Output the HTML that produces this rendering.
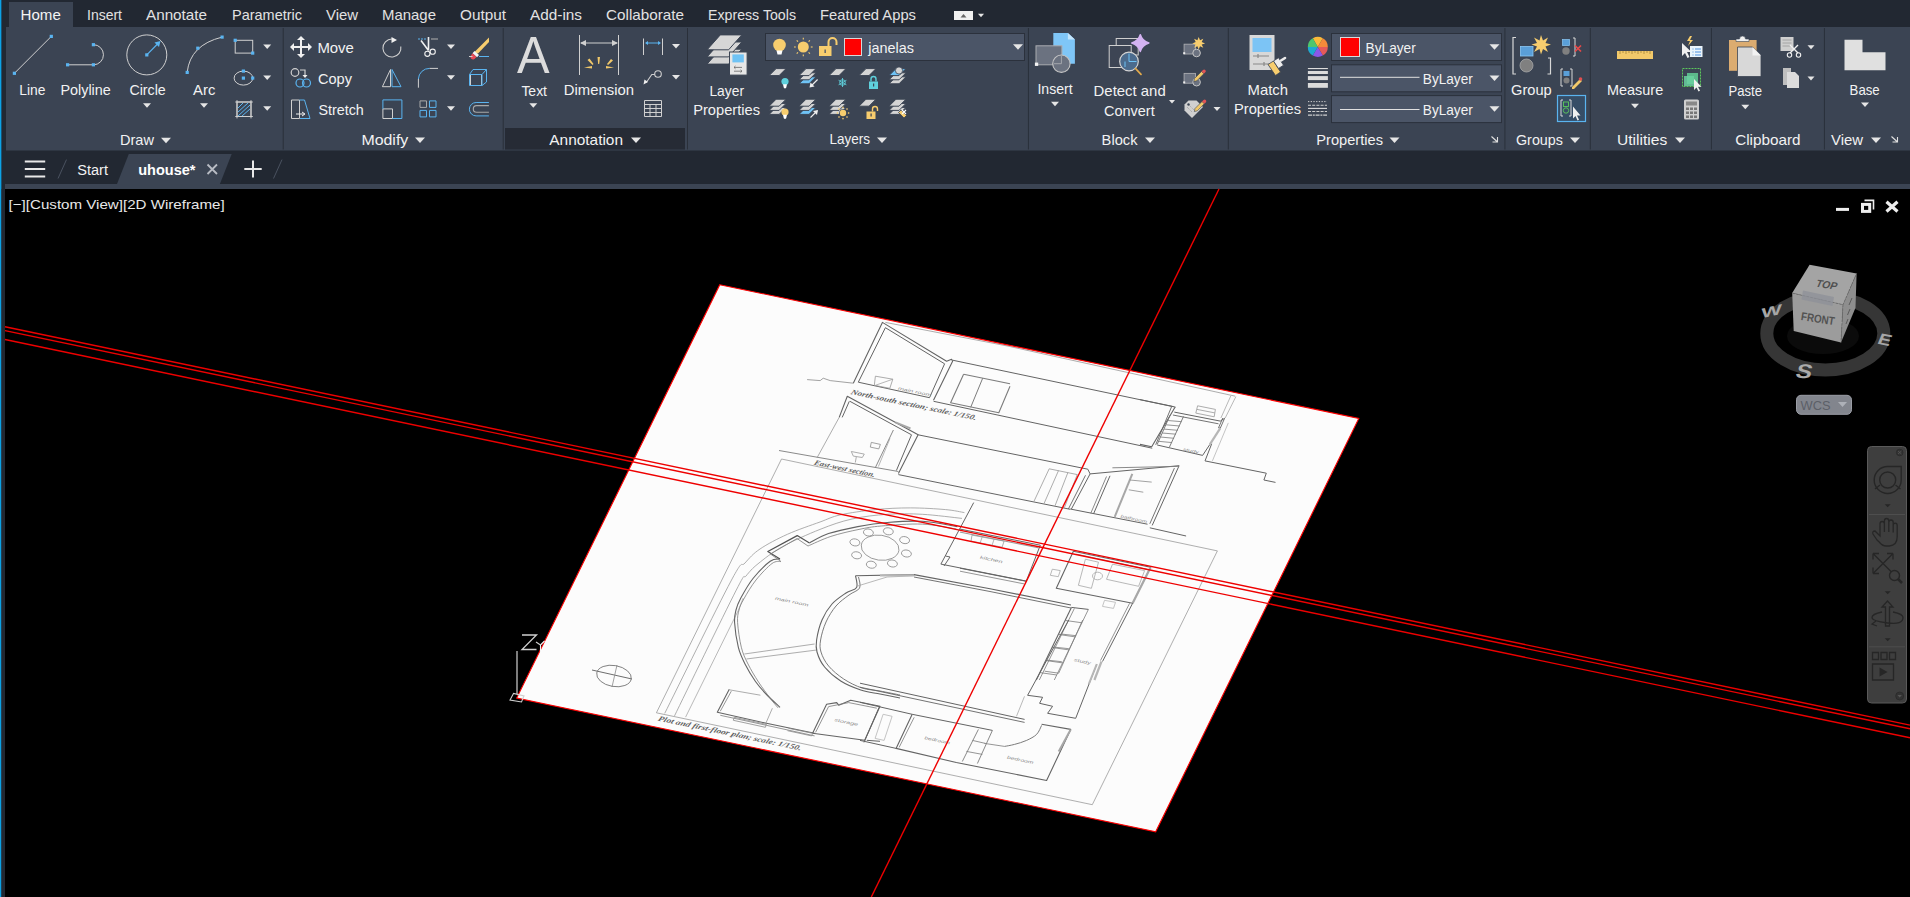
<!DOCTYPE html>
<html><head><meta charset="utf-8"><style>
html,body{margin:0;padding:0;background:#000;width:1910px;height:897px;overflow:hidden}
svg{display:block}
text{font-family:"Liberation Sans", sans-serif}
</style></head><body>
<svg width="1910" height="897" viewBox="0 0 1910 897">
<rect x="0" y="0" width="1910" height="897" fill="#000" />
<rect x="0" y="0" width="1910" height="189" fill="#222832" />
<rect x="0" y="0" width="1.2" height="897" fill="#0ca2e6" />
<rect x="6" y="27" width="1904" height="123.5" fill="#3b4453" />
<rect x="9" y="2" width="64" height="25" fill="#3b4453" />
<rect x="282.7" y="28" width="1" height="121.5" fill="#2a303a" />
<rect x="502.7" y="28" width="1" height="121.5" fill="#2a303a" />
<rect x="687.0" y="28" width="1" height="121.5" fill="#2a303a" />
<rect x="1027.9" y="28" width="1" height="121.5" fill="#2a303a" />
<rect x="1227.8" y="28" width="1" height="121.5" fill="#2a303a" />
<rect x="1504.4" y="28" width="1" height="121.5" fill="#2a303a" />
<rect x="1589.8" y="28" width="1" height="121.5" fill="#2a303a" />
<rect x="1710.9" y="28" width="1" height="121.5" fill="#2a303a" />
<rect x="1823.9" y="28" width="1" height="121.5" fill="#2a303a" />
<rect x="505" y="128" width="180" height="21.6" fill="#262b35" />
<rect x="5" y="184" width="1905" height="5" fill="#3b4453" />
<text x="20.6" y="20.0" font-size="15" fill="#f4f4f4" font-weight="normal" textLength="40.2" lengthAdjust="spacingAndGlyphs" >Home</text>
<text x="87.0" y="20.0" font-size="15" fill="#e2e2e2" font-weight="normal" textLength="35.0" lengthAdjust="spacingAndGlyphs" >Insert</text>
<text x="146.0" y="20.0" font-size="15" fill="#e2e2e2" font-weight="normal" textLength="61.0" lengthAdjust="spacingAndGlyphs" >Annotate</text>
<text x="232.0" y="20.0" font-size="15" fill="#e2e2e2" font-weight="normal" textLength="70.0" lengthAdjust="spacingAndGlyphs" >Parametric</text>
<text x="326.0" y="20.0" font-size="15" fill="#e2e2e2" font-weight="normal" textLength="32.0" lengthAdjust="spacingAndGlyphs" >View</text>
<text x="382.0" y="20.0" font-size="15" fill="#e2e2e2" font-weight="normal" textLength="54.0" lengthAdjust="spacingAndGlyphs" >Manage</text>
<text x="460.0" y="20.0" font-size="15" fill="#e2e2e2" font-weight="normal" textLength="46.0" lengthAdjust="spacingAndGlyphs" >Output</text>
<text x="530.0" y="20.0" font-size="15" fill="#e2e2e2" font-weight="normal" textLength="52.0" lengthAdjust="spacingAndGlyphs" >Add-ins</text>
<text x="606.0" y="20.0" font-size="15" fill="#e2e2e2" font-weight="normal" textLength="78.0" lengthAdjust="spacingAndGlyphs" >Collaborate</text>
<text x="708.0" y="20.0" font-size="15" fill="#e2e2e2" font-weight="normal" textLength="88.0" lengthAdjust="spacingAndGlyphs" >Express Tools</text>
<text x="820.0" y="20.0" font-size="15" fill="#e2e2e2" font-weight="normal" textLength="96.0" lengthAdjust="spacingAndGlyphs" >Featured Apps</text>
<line x1="14.4" y1="73.3" x2="51.3" y2="36.4" stroke="#d0d0d0" stroke-width="1"/>
<rect x="12.8" y="71.7" width="3.2" height="3.2" fill="#5ab4f0"/>
<rect x="49.7" y="34.8" width="3.2" height="3.2" fill="#5ab4f0"/>
<path d="M67.6 64.8H93.4A10 10 0 0 0 93.4 44.7" fill="none" stroke="#d0d0d0" stroke-width="1"/>
<rect x="66.0" y="63.2" width="3.2" height="3.2" fill="#5ab4f0"/>
<rect x="91.8" y="63.2" width="3.2" height="3.2" fill="#5ab4f0"/>
<rect x="91.8" y="43.1" width="3.2" height="3.2" fill="#5ab4f0"/>
<circle cx="146.8" cy="54.9" r="20" fill="none" stroke="#d0d0d0" stroke-width="1"/>
<line x1="146.8" y1="54.9" x2="158" y2="43.5" stroke="#5ab4f0" stroke-width="1.2"/>
<path d="M160.5 41 l-6 1.5 l4.5 4.5z" fill="#5ab4f0"/>
<rect x="145.2" y="53.3" width="3.2" height="3.2" fill="#5ab4f0"/>
<path d="M187.2 72.4 Q190 45 222.1 37.1" fill="none" stroke="#d0d0d0" stroke-width="1"/>
<rect x="185.6" y="70.8" width="3.2" height="3.2" fill="#5ab4f0"/>
<rect x="196.2" y="46.6" width="3.2" height="3.2" fill="#5ab4f0"/>
<rect x="220.5" y="35.5" width="3.2" height="3.2" fill="#5ab4f0"/>
<rect x="235.2" y="40.3" width="17.5" height="12.8" fill="none" stroke="#d0d0d0" stroke-width="1"/>
<rect x="233.6" y="38.7" width="3.2" height="3.2" fill="#5ab4f0"/>
<rect x="251.1" y="51.5" width="3.2" height="3.2" fill="#5ab4f0"/>
<path d="M263.2 44.5h8l-4.0 4.5z" fill="#e6e6e6"/>
<ellipse cx="243.4" cy="78.1" rx="9.3" ry="7" fill="none" stroke="#d0d0d0" stroke-width="1"/>
<rect x="241.8" y="76.5" width="3.2" height="3.2" fill="#5ab4f0"/>
<rect x="241.8" y="69.5" width="3.2" height="3.2" fill="#5ab4f0"/>
<rect x="251.1" y="76.5" width="3.2" height="3.2" fill="#5ab4f0"/>
<path d="M263.2 75.5h8l-4.0 4.5z" fill="#e6e6e6"/>
<rect x="237" y="102" width="14" height="14.5" fill="none" stroke="#d0d0d0" stroke-width="1"/>
<path d="M235.3 102H252.8M235.3 116.5H252.8M237 100.2V118.4M251 100.2V118.4" stroke="#d0d0d0" stroke-width="1"/>
<path d="M238 112l10-9M238 116l12-11M242 116l8-7M238 108l5-5" stroke="#5ab4f0" stroke-width="1"/>
<path d="M263.2 106.2h8l-4.0 4.5z" fill="#e6e6e6"/>
<text x="19.3" y="95.2" font-size="15" fill="#f2f2f2" font-weight="normal" textLength="26.2" lengthAdjust="spacingAndGlyphs" >Line</text>
<text x="60.4" y="95.2" font-size="15" fill="#f2f2f2" font-weight="normal" textLength="50.4" lengthAdjust="spacingAndGlyphs" >Polyline</text>
<text x="129.4" y="95.2" font-size="15" fill="#f2f2f2" font-weight="normal" textLength="36.4" lengthAdjust="spacingAndGlyphs" >Circle</text>
<text x="193.1" y="95.2" font-size="15" fill="#f2f2f2" font-weight="normal" textLength="22.2" lengthAdjust="spacingAndGlyphs" >Arc</text>
<path d="M143.0 103.2h8l-4.0 4.5z" fill="#e6e6e6"/>
<path d="M200.0 103.2h8l-4.0 4.5z" fill="#e6e6e6"/>
<text x="120.0" y="145.0" font-size="15" fill="#f2f2f2" font-weight="normal" textLength="34.0" lengthAdjust="spacingAndGlyphs" >Draw</text>
<path d="M161.0 137.7h10l-5.0 5.5z" fill="#e6e6e6"/>
<path d="M301 37v20M291 47h20" stroke="#f0f0f0" stroke-width="2"/>
<path d="M301 36l-4 4h8zM301 58l-4-4h8zM290 47l4-4v8zM312 47l-4-4v8z" fill="#f0f0f0"/>
<text x="317.4" y="52.5" font-size="15" fill="#f2f2f2" font-weight="normal" textLength="36.5" lengthAdjust="spacingAndGlyphs" >Move</text>
<circle cx="295" cy="72.5" r="3.8" fill="none" stroke="#d0d0d0" stroke-width="1.2"/>
<path d="M300 70h5v6" fill="none" stroke="#d0d0d0" stroke-width="1.2"/><path d="M302.5 75h5l-2.5 3z" fill="#f0f0f0"/>
<circle cx="300" cy="83" r="4" fill="none" stroke="#5ab4f0" stroke-width="1.2"/><circle cx="306.5" cy="83" r="4" fill="none" stroke="#5ab4f0" stroke-width="1.2"/>
<text x="318.0" y="83.7" font-size="15" fill="#f2f2f2" font-weight="normal" textLength="34.0" lengthAdjust="spacingAndGlyphs" >Copy</text>
<path d="M291.5 100h8v18.5h-8z" fill="none" stroke="#d0d0d0" stroke-width="1"/>
<path d="M299.5 100h5l5.5 18.5h-10" fill="none" stroke="#5ab4f0" stroke-width="1"/>
<path d="M296 114h8M302 112l3 2-3 2" fill="none" stroke="#f0f0f0" stroke-width="1"/>
<text x="318.4" y="114.9" font-size="15" fill="#f2f2f2" font-weight="normal" textLength="45.4" lengthAdjust="spacingAndGlyphs" >Stretch</text>
<path d="M392 39A9 9 0 1 0 400.8 46.5" fill="none" stroke="#d0d0d0" stroke-width="1.1"/><path d="M391.5 37l5.5 3-5.5 3z" fill="#f0f0f0"/>
<path d="M418 39h9" stroke="#5ab4f0" stroke-width="1" stroke-dasharray="2 1"/><path d="M431 39h7" stroke="#a8a8a8" stroke-width="1.1"/>
<path d="M421 40.5l7.5 10M428.5 37v13.5" stroke="#f0f0f0" stroke-width="1.6"/><circle cx="427.4" cy="53.8" r="2.6" fill="none" stroke="#f0f0f0" stroke-width="1.1"/><circle cx="432.7" cy="51.7" r="2.6" fill="none" stroke="#f0f0f0" stroke-width="1.1"/>
<path d="M447.0 44.5h8l-4.0 4.5z" fill="#e6e6e6"/>
<path d="M478 53.5l11-11.5v-4.5l-15.5 15.5z" fill="#f7cd6e"/><path d="M474.5 51l4.5 4-2 2.3-4.5-4z" fill="#f4f4f4"/><path d="M472.5 53.3l4 3.7-2 2a2.5 2.5 0 0 1-3.5-3.5z" fill="#e84a55"/><path d="M479 56.5h10" stroke="#5ab4f0" stroke-width="1"/><path d="M469 56.5h3.5" stroke="#d0d0d0" stroke-width="1"/>
<path d="M382.4 86.7L390.5 69.5V86.7z" fill="none" stroke="#d0d0d0" stroke-width="1"/><path d="M392 69.5L401 86.7H392z" fill="none" stroke="#5ab4f0" stroke-width="1"/>
<path d="M418.4 87.7V79" fill="none" stroke="#d0d0d0" stroke-width="1"/><path d="M418.4 79A11 11 0 0 1 429.7 68.4" fill="none" stroke="#5ab4f0" stroke-width="1"/><path d="M429.7 68.4H438" fill="none" stroke="#d0d0d0" stroke-width="1"/>
<path d="M447.0 75.2h8l-4.0 4.5z" fill="#e6e6e6"/>
<path d="M470.5 74.5h11v11h-11z" fill="none" stroke="#d0d0d0" stroke-width="1"/><path d="M469.5 74.5v11h12.5l4.5-3.5v-12.5h-13.5zM469.5 74.5h12.5l4.5-5M482 74.5v11" fill="none" stroke="#5ab4f0" stroke-width="1"/>
<path d="M382.9 108.9h9.6v9.6h-9.6z" fill="none" stroke="#d0d0d0" stroke-width="1"/><path d="M382.9 108.9V99.9h19v18.6h-9.4" fill="none" stroke="#5ab4f0" stroke-width="1"/>
<path d="M429.5 100.9h6.5v6.5h-6.5zM420 110.4h6.5v6.5h-6.5zM429.5 110.4h6.5v6.5h-6.5z" fill="none" stroke="#5ab4f0" stroke-width="1"/><path d="M420 100.9h6.5v6.5h-6.5z" fill="none" stroke="#a8a8a8" stroke-width="1"/>
<path d="M447.0 106.3h8l-4.0 4.5z" fill="#e6e6e6"/>
<path d="M488.9 102.5h-12.8a6.7 6.7 0 0 0 0 13.4h12.8" fill="none" stroke="#5ab4f0" stroke-width="1"/><path d="M488.9 105.6h-12.3a3.3 3.3 0 0 0 0 6.6h12.3" fill="none" stroke="#a8a8a8" stroke-width="1.1"/>
<text x="361.4" y="144.6" font-size="15" fill="#f2f2f2" font-weight="normal" textLength="46.9" lengthAdjust="spacingAndGlyphs" >Modify</text>
<path d="M415.0 137.6h10l-5.0 5.5z" fill="#e6e6e6"/>
<text x="517.0" y="72.5" font-size="51" fill="#dcdcdc" font-weight="normal" textLength="32.6" lengthAdjust="spacingAndGlyphs" >A</text>
<text x="521.4" y="95.7" font-size="15" fill="#f2f2f2" font-weight="normal" textLength="25.6" lengthAdjust="spacingAndGlyphs" >Text</text>
<path d="M529.3 103.2h8l-4.0 4.5z" fill="#e6e6e6"/>
<path d="M579.5 35v40M618.5 35v40M581 43h36" stroke="#d0d0d0" stroke-width="1"/><path d="M580 43l6-3v6zM618 43l-6-3v6z" fill="#d0d0d0"/>
<g fill="#f2c96a"><path d="M597.5 57l2.5 0 -0.8 7h-1z"/><path d="M587.5 60l2-1.5 4 5.5-1 1z"/><path d="M611 59l2 1.5-5 4.5-1-1z"/><path d="M584 67.5l8-1.5v2.5z"/><path d="M614 67.5l-8-1.5v2.5z"/></g>
<text x="563.8" y="95.3" font-size="15" fill="#f2f2f2" font-weight="normal" textLength="70.2" lengthAdjust="spacingAndGlyphs" >Dimension</text>
<path d="M643.5 38.5v16.5M662.5 38.5v16.5" stroke="#d0d0d0" stroke-width="1"/><path d="M646 43h14" stroke="#5ab4f0" stroke-width="1"/><path d="M645 43l3-2v4zM661 43l-3-2v4z" fill="#5ab4f0"/>
<path d="M672.0 44.1h8l-4.0 4.5z" fill="#e6e6e6"/>
<circle cx="658" cy="74" r="3.3" fill="none" stroke="#d0d0d0" stroke-width="1.1"/><path d="M654.8 74.5h-3l-5.5 8" fill="none" stroke="#d0d0d0" stroke-width="1.1"/><path d="M643.5 84.5l1-5 3.5 2.5z" fill="#f0f0f0"/>
<path d="M672.0 75.0h8l-4.0 4.5z" fill="#e6e6e6"/>
<path d="M644.5 100.5h17v16h-17zM644.5 104.5h17M644.5 108.5h17M644.5 112.5h17M650 104.5v12M656 104.5v12" fill="none" stroke="#d0d0d0" stroke-width="1"/>
<text x="549.3" y="145.0" font-size="15" fill="#f2f2f2" font-weight="normal" textLength="73.7" lengthAdjust="spacingAndGlyphs" >Annotation</text>
<path d="M631.0 137.6h10l-5.0 5.5z" fill="#e6e6e6"/>
<path d="M707.1 64.1L720.3 49.2H741.8L728.6 64.1z" fill="#d6d6d6" stroke="#3b4453" stroke-width="1"/>
<path d="M707.1 56.9L720.3 42.0H741.8L728.6 56.9z" fill="#d6d6d6" stroke="#3b4453" stroke-width="1"/>
<path d="M707.1 49.8L720.3 34.9H741.8L728.6 49.8z" fill="#d6d6d6" stroke="#3b4453" stroke-width="1"/>
<rect x="729.5" y="52" width="17.6" height="23.1" fill="#e6e6e6" stroke="#3b4453" stroke-width="1"/><rect x="732.4" y="54.4" width="11.4" height="8" fill="#6fc3f5"/>
<path d="M734 67.4h8M734 71.2h8" stroke="#666" stroke-width="0.8"/><path d="M735.5 66l-1.5 1.4 1.5 1.4M740.5 69.8l1.5 1.4-1.5 1.4" fill="none" stroke="#666" stroke-width="0.8"/>
<text x="709.4" y="95.5" font-size="15" fill="#f2f2f2" font-weight="normal" textLength="34.6" lengthAdjust="spacingAndGlyphs" >Layer</text>
<text x="693.2" y="114.8" font-size="15" fill="#f2f2f2" font-weight="normal" textLength="66.8" lengthAdjust="spacingAndGlyphs" >Properties</text>
<rect x="765.5" y="33.5" width="259" height="27" fill="#4b5567" stroke="#2b313c" stroke-width="1"/>
<circle cx="779.5" cy="45" r="6.3" fill="#f7cd6e"/><path d="M776.5 50.5h6l-1 4h-4z" fill="#fff"/>
<circle cx="803.3" cy="47" r="5.5" fill="#f7cd6e"/>
<line x1="810.8" y1="47.0" x2="812.6" y2="47.0" stroke="#f7cd6e" stroke-width="1.1"/>
<line x1="808.6" y1="52.3" x2="809.9" y2="53.6" stroke="#f7cd6e" stroke-width="1.1"/>
<line x1="803.3" y1="54.5" x2="803.3" y2="56.3" stroke="#f7cd6e" stroke-width="1.1"/>
<line x1="798.0" y1="52.3" x2="796.7" y2="53.6" stroke="#f7cd6e" stroke-width="1.1"/>
<line x1="795.8" y1="47.0" x2="794.0" y2="47.0" stroke="#f7cd6e" stroke-width="1.1"/>
<line x1="798.0" y1="41.7" x2="796.7" y2="40.4" stroke="#f7cd6e" stroke-width="1.1"/>
<line x1="803.3" y1="39.5" x2="803.3" y2="37.7" stroke="#f7cd6e" stroke-width="1.1"/>
<line x1="808.6" y1="41.7" x2="809.9" y2="40.4" stroke="#f7cd6e" stroke-width="1.1"/>
<rect x="819" y="46" width="12.5" height="10" fill="#f7cd6e"/><path d="M828.5 46v-4a4 4 0 0 1 8 0v3" fill="none" stroke="#f7cd6e" stroke-width="2"/><rect x="824.5" y="49.5" width="1.3" height="3.5" fill="#4b5567"/>
<rect x="844.5" y="38.5" width="17" height="17" fill="#ff0000" stroke="#d8d8d8" stroke-width="1"/>
<text x="868.3" y="52.5" font-size="15" fill="#f2f2f2" font-weight="normal" textLength="45.7" lengthAdjust="spacingAndGlyphs" >janelas</text>
<path d="M1013.0 44.2h10l-5.0 5.5z" fill="#e6e6e6"/>
<path d="M769.1 75.6L776.1 68.6H786.1L779.1 75.6z" fill="#d4d4d4" stroke="#3b4453" stroke-width="1"/>
<circle cx="785" cy="81.5" r="3.6" fill="#5fd0dc"/><path d="M783 84.3h4l-0.6 2.8a1.4 1.4 0 0 1-2.8 0z" fill="#fff"/>
<path d="M799.0 83.8L806.0 76.8H816.0L809.0 83.8z" fill="#6fc3f5" stroke="#3b4453" stroke-width="1"/>
<path d="M799.0 79.8L806.0 72.8H816.0L809.0 79.8z" fill="#d4d4d4" stroke="#3b4453" stroke-width="1"/>
<path d="M799.0 75.6L806.0 68.6H816.0L809.0 75.6z" fill="#d4d4d4" stroke="#3b4453" stroke-width="1"/>
<path d="M817.6 79.5l-6.5 6.5" stroke="#eee" stroke-width="1.1"/><path d="M809.5 87.5l1-5 4 4z" fill="#eee"/>
<path d="M829.0 75.6L836.0 68.6H846.0L839.0 75.6z" fill="#d4d4d4" stroke="#3b4453" stroke-width="1"/>
<g stroke="#5fd0dc" stroke-width="0.9"><path d="M842.5 78v9M838.6 80.3l7.8 4.5M838.6 84.8l7.8-4.5"/><circle cx="842.5" cy="82.5" r="2.8" fill="none"/></g>
<path d="M859.0 75.6L866.0 68.6H876.0L869.0 75.6z" fill="#d4d4d4" stroke="#3b4453" stroke-width="1"/>
<rect x="869" y="81.5" width="9" height="7.5" fill="#5fd0dc"/><path d="M871 81.5v-2.5a2.5 2.5 0 0 1 5 0v2.5" fill="none" stroke="#5fd0dc" stroke-width="1.4"/><rect x="873" y="83.5" width="1.2" height="3" fill="#3b4453"/>
<path d="M889.0 83.8L896.0 76.8H906.0L899.0 83.8z" fill="#d4d4d4" stroke="#3b4453" stroke-width="1"/>
<path d="M889.0 79.8L896.0 72.8H906.0L899.0 79.8z" fill="#d4d4d4" stroke="#3b4453" stroke-width="1"/>
<path d="M889.0 75.6L896.0 68.6H906.0L899.0 75.6z" fill="#6fc3f5" stroke="#3b4453" stroke-width="1"/>
<circle cx="899" cy="70.5" r="3.6" fill="#d4d4d4" stroke="#3b4453" stroke-width="0.8"/>
<path d="M769.1 114.4L776.1 107.4H786.1L779.1 114.4z" fill="#d4d4d4" stroke="#3b4453" stroke-width="1"/>
<path d="M769.1 110.4L776.1 103.4H786.1L779.1 110.4z" fill="#d4d4d4" stroke="#3b4453" stroke-width="1"/>
<path d="M769.1 106.2L776.1 99.2H786.1L779.1 106.2z" fill="#d4d4d4" stroke="#3b4453" stroke-width="1"/>
<circle cx="785" cy="112" r="3.6" fill="#f7cd6e"/><path d="M783 114.8h4l-0.6 2.8a1.4 1.4 0 0 1-2.8 0z" fill="#fff"/>
<path d="M799.0 114.4L806.0 107.4H816.0L809.0 114.4z" fill="#6fc3f5" stroke="#3b4453" stroke-width="1"/>
<path d="M799.0 110.4L806.0 103.4H816.0L809.0 110.4z" fill="#d4d4d4" stroke="#3b4453" stroke-width="1"/>
<path d="M799.0 106.2L806.0 99.2H816.0L809.0 106.2z" fill="#d4d4d4" stroke="#3b4453" stroke-width="1"/>
<path d="M810.5 117.5l6.5-6.5" stroke="#eee" stroke-width="1.1"/><path d="M818 110l-1 5-4-4z" fill="#eee"/>
<path d="M829.0 114.4L836.0 107.4H846.0L839.0 114.4z" fill="#d4d4d4" stroke="#3b4453" stroke-width="1"/>
<path d="M829.0 110.4L836.0 103.4H846.0L839.0 110.4z" fill="#d4d4d4" stroke="#3b4453" stroke-width="1"/>
<path d="M829.0 106.2L836.0 99.2H846.0L839.0 106.2z" fill="#d4d4d4" stroke="#3b4453" stroke-width="1"/>
<circle cx="843" cy="113" r="3.8" fill="#3b4453"/><circle cx="843" cy="113" r="3.2" fill="#f7cd6e"/>
<rect x="847.9" y="112.3" width="1.4" height="1.4" fill="#f7cd6e"/>
<rect x="846.3" y="116.3" width="1.4" height="1.4" fill="#f7cd6e"/>
<rect x="842.3" y="117.9" width="1.4" height="1.4" fill="#f7cd6e"/>
<rect x="838.3" y="116.3" width="1.4" height="1.4" fill="#f7cd6e"/>
<rect x="836.7" y="112.3" width="1.4" height="1.4" fill="#f7cd6e"/>
<rect x="838.3" y="108.3" width="1.4" height="1.4" fill="#f7cd6e"/>
<rect x="842.3" y="106.7" width="1.4" height="1.4" fill="#f7cd6e"/>
<rect x="846.3" y="108.3" width="1.4" height="1.4" fill="#f7cd6e"/>
<path d="M859.0 106.2L866.0 99.2H876.0L869.0 106.2z" fill="#d4d4d4" stroke="#3b4453" stroke-width="1"/>
<rect x="866.5" y="111.5" width="9" height="7.5" fill="#f7cd6e"/><path d="M872.5 111.5v-2.5a2.5 2.5 0 0 1 5 0v2" fill="none" stroke="#f7cd6e" stroke-width="1.4"/><rect x="870.5" y="113.5" width="1.2" height="3" fill="#3b4453"/>
<path d="M889.0 114.4L896.0 107.4H906.0L899.0 114.4z" fill="#d4d4d4" stroke="#3b4453" stroke-width="1"/>
<path d="M889.0 110.4L896.0 103.4H906.0L899.0 110.4z" fill="#d4d4d4" stroke="#3b4453" stroke-width="1"/>
<path d="M889.0 106.2L896.0 99.2H906.0L899.0 106.2z" fill="#d4d4d4" stroke="#3b4453" stroke-width="1"/>
<path d="M898.5 112.5l5.5 5.5 2.5-2.5-5.5-5.5z" fill="#f7cd6e" stroke="#3b4453" stroke-width="0.8"/><path d="M902 110l4 4M906 110l-4 4" stroke="#fff" stroke-width="1.1"/>
<text x="829.4" y="144.0" font-size="15" fill="#f2f2f2" font-weight="normal" textLength="40.6" lengthAdjust="spacingAndGlyphs" >Layers</text>
<path d="M877.0 137.6h10l-5.0 5.5z" fill="#e6e6e6"/>
<path d="M1053.3 32.9H1067.9L1074.9 39.5V63.7H1053.3z" fill="#7fc6f7"/><path d="M1067.9 32.9V39.5H1074.9z" fill="#c4e6fc"/>
<rect x="1036" y="45.8" width="25.9" height="19" fill="#6b7280" stroke="#a9abb0" stroke-width="1"/>
<circle cx="1061.4" cy="63.7" r="8.7" fill="#6b7280" stroke="#c4c4c4" stroke-width="1.1"/>
<path d="M1054 63.7h7.4v-8" fill="none" stroke="#a9abb0" stroke-width="0.9"/>
<rect x="1034.9" y="62.6" width="3.3" height="3.3" fill="#f4f4f4"/>
<text x="1037.4" y="94.2" font-size="15" fill="#f2f2f2" font-weight="normal" textLength="35.2" lengthAdjust="spacingAndGlyphs" >Insert</text>
<path d="M1051.0 101.8h8l-4.0 4.5z" fill="#e6e6e6"/>
<rect x="1116.2" y="38.5" width="22" height="16.5" fill="#3d4554" stroke="#cfcfcf" stroke-width="1"/>
<rect x="1109.2" y="45.5" width="22" height="22" fill="#3d4554" stroke="#cfcfcf" stroke-width="1"/>
<circle cx="1129" cy="61.5" r="9.3" fill="#4b6b8d" stroke="#d4d4d4" stroke-width="1.2"/>
<path d="M1129 53.5v8h7.5M1125 67v-5.5" fill="none" stroke="#6fc3f5" stroke-width="1"/>
<path d="M1135.5 68.5l5.5 5.8" stroke="#e2aa4c" stroke-width="1.8" stroke-linecap="round"/>
<path d="M1140.3 34.8Q1142 41 1148.8 43.1Q1142 45.2 1140.3 51.4Q1138.6 45.2 1131.8 43.1Q1138.6 41 1140.3 34.8z" fill="#d4b3f2" stroke="#d4b3f2" stroke-width="1.6" stroke-linejoin="round"/>
<text x="1093.6" y="96.2" font-size="15" fill="#f2f2f2" font-weight="normal" textLength="72.1" lengthAdjust="spacingAndGlyphs" >Detect and</text>
<text x="1104.0" y="116.0" font-size="15" fill="#f2f2f2" font-weight="normal" textLength="50.7" lengthAdjust="spacingAndGlyphs" >Convert</text>
<path d="M1169.0 100.0h6l-3.0 3.5z" fill="#e6e6e6"/>
<rect x="1184.1" y="44.2" width="11.4" height="9.8" fill="#6b7280" stroke="#a9abb0" stroke-width="0.9"/><circle cx="1196.6" cy="53.0" r="3.8" fill="#6b7280" stroke="#c4c4c4" stroke-width="1"/><rect x="1183.1999999999998" y="52.2" width="2" height="2" fill="#eee"/>
<path d="M1198.7 37l1.3 3.3 3.3-1.5-1.6 3.3 3.4 1.3-3.4 1.1 1.6 3.2-3.3-1.4-1.3 3.3-1.3-3.3-3.3 1.4 1.6-3.2-3.4-1.1 3.4-1.3-1.6-3.3 3.3 1.5z" fill="#f7cd6e"/>
<rect x="1184.1" y="73.4" width="11.4" height="9.8" fill="#6b7280" stroke="#a9abb0" stroke-width="0.9"/><circle cx="1196.6" cy="82.2" r="3.8" fill="#6b7280" stroke="#c4c4c4" stroke-width="1"/><rect x="1183.1999999999998" y="81.4" width="2" height="2" fill="#eee"/>
<path d="M1194.5 78.5l7-7 2.3 2.3-7 7-3 .8z" fill="#f2c96a" stroke="#3b4453" stroke-width="0.6"/><path d="M1201.5 71.5l1.5-1.5a1.5 1.5 0 0 1 2.3 2.3l-1.5 1.5z" fill="#e05555"/>
<path d="M1184.5 104.5l4-4h8l6.5 6.5-11 11-7.5-7.5z" fill="#d0d0d0"/><circle cx="1188.5" cy="104.5" r="1.2" fill="#3b4453"/><path d="M1187 107l5 5M1189 105l6 6" stroke="#888" stroke-width="0.7" stroke-dasharray="1 1"/>
<path d="M1195 108.5l7-7 2.3 2.3-7 7-3 .8z" fill="#f2c96a" stroke="#3b4453" stroke-width="0.6"/><path d="M1202 101.5l1.5-1.5a1.5 1.5 0 0 1 2.3 2.3l-1.5 1.5z" fill="#e05555"/>
<path d="M1213.5 107.0h7l-3.5 4z" fill="#e6e6e6"/>
<text x="1101.6" y="145.0" font-size="15" fill="#f2f2f2" font-weight="normal" textLength="35.9" lengthAdjust="spacingAndGlyphs" >Block</text>
<path d="M1145.0 137.6h10l-5.0 5.5z" fill="#e6e6e6"/>
<rect x="1249.5" y="35" width="25" height="35" fill="#d8d8d8"/><rect x="1252.5" y="38" width="19" height="14" fill="#7cc4f5"/>
<path d="M1253 56h16M1253 64h16" stroke="#888" stroke-width="1"/><path d="M1258 54v4M1264 62v4" stroke="#888" stroke-width="1.2"/>
<path d="M1268 64.5l5.5-3.5 7 11-5 3.5z" fill="#f7cd6e" stroke="#3b4453" stroke-width="0.8"/><path d="M1273.5 61l5-3.3 5 7.5-5 3.3z" fill="#ececec" stroke="#3b4453" stroke-width="0.8"/><path d="M1281 60.5l4-2.5" stroke="#ececec" stroke-width="2.6" stroke-linecap="round"/>
<text x="1247.5" y="95.0" font-size="15" fill="#f2f2f2" font-weight="normal" textLength="40.5" lengthAdjust="spacingAndGlyphs" >Match</text>
<text x="1234.0" y="114.2" font-size="15" fill="#f2f2f2" font-weight="normal" textLength="67.0" lengthAdjust="spacingAndGlyphs" >Properties</text>
<path d="M1317.8 46.9L1312.80 38.24A10 10 0 0 1 1322.80 38.24z" fill="#f9b93a"/>
<path d="M1317.8 46.9L1322.80 38.24A10 10 0 0 1 1327.80 46.90z" fill="#f58a3a"/>
<path d="M1317.8 46.9L1327.80 46.90A10 10 0 0 1 1322.80 55.56z" fill="#e55a5a"/>
<path d="M1317.8 46.9L1322.80 55.56A10 10 0 0 1 1312.80 55.56z" fill="#8a58ea"/>
<path d="M1317.8 46.9L1312.80 55.56A10 10 0 0 1 1307.80 46.90z" fill="#1ea9d2"/>
<path d="M1317.8 46.9L1307.80 46.90A10 10 0 0 1 1312.80 38.24z" fill="#4ec66c"/>
<rect x="1307.9" y="68" width="20" height="1.1" fill="#dcdcdc"/><rect x="1307.9" y="71" width="20" height="3" fill="#dcdcdc"/><rect x="1307.9" y="76.1" width="20" height="4" fill="#dcdcdc"/><rect x="1307.9" y="83" width="20" height="4.8" fill="#dcdcdc"/>
<path d="M1308 101.6h19" stroke="#cfcfcf" stroke-width="1" stroke-dasharray="1.3 1.4"/><path d="M1308 105.3h19" stroke="#cfcfcf" stroke-width="1.1" stroke-dasharray="3 1.2"/><path d="M1308 108.4h19" stroke="#dedede" stroke-width="1.1"/><path d="M1308 111.5h19" stroke="#cfcfcf" stroke-width="1.1" stroke-dasharray="3 1.2"/><path d="M1308 115.1h19" stroke="#cfcfcf" stroke-width="1.1" stroke-dasharray="4 0.8 2 0.8"/>
<rect x="1331.5" y="33.5" width="170" height="27" fill="#4b5567" stroke="#2b313c" stroke-width="1"/>
<path d="M1489.5 44.2h10l-5.0 5.5z" fill="#e6e6e6"/>
<rect x="1331.5" y="64.8" width="170" height="27" fill="#4b5567" stroke="#2b313c" stroke-width="1"/>
<path d="M1489.5 75.5h10l-5.0 5.5z" fill="#e6e6e6"/>
<rect x="1331.5" y="95.6" width="170" height="27" fill="#4b5567" stroke="#2b313c" stroke-width="1"/>
<path d="M1489.5 106.3h10l-5.0 5.5z" fill="#e6e6e6"/>
<rect x="1340.5" y="37.5" width="19" height="19" fill="#ff0000" stroke="#d8d8d8" stroke-width="1"/>
<text x="1365.6" y="53.1" font-size="15" fill="#f2f2f2" font-weight="normal" textLength="50.2" lengthAdjust="spacingAndGlyphs" >ByLayer</text>
<path d="M1340 77.3h79.5M1340 109.5h79.5" stroke="#e0e0e0" stroke-width="1"/>
<text x="1422.8" y="84.1" font-size="15" fill="#f2f2f2" font-weight="normal" textLength="50.0" lengthAdjust="spacingAndGlyphs" >ByLayer</text>
<text x="1422.8" y="115.4" font-size="15" fill="#f2f2f2" font-weight="normal" textLength="50.0" lengthAdjust="spacingAndGlyphs" >ByLayer</text>
<text x="1316.3" y="145.0" font-size="15" fill="#f2f2f2" font-weight="normal" textLength="66.7" lengthAdjust="spacingAndGlyphs" >Properties</text>
<path d="M1389.5 137.6h10l-5.0 5.5z" fill="#e6e6e6"/>
<path d="M1491.5 136.5l6 5.5M1497.5 137v5h-5" fill="none" stroke="#e0e0e0" stroke-width="1.1"/>
<path d="M1516 37.5h-3v36.5h3M1548 58h2.5v16h-3" fill="none" stroke="#d8d8d8" stroke-width="1.2"/>
<rect x="1520.5" y="46.5" width="12.5" height="9.5" fill="#5a9fd8" stroke="#8ac8f5" stroke-width="0.8"/><circle cx="1526.5" cy="65.5" r="6.5" fill="#808080" stroke="#a8a8a8" stroke-width="0.8"/>
<path d="M1541 35l2 5.5 5-3-2.5 5.5 5.5 1.5-5.5 2 2.5 5.5-5-3-2 5.5-1.5-5.5-5.5 3 3-5.5-5.5-2 5.5-1.5-3-5.5 5.5 3z" fill="#f7cd6e"/>
<text x="1511.0" y="94.8" font-size="15" fill="#f2f2f2" font-weight="normal" textLength="40.7" lengthAdjust="spacingAndGlyphs" >Group</text>
<rect x="1562.5" y="39.5" width="7" height="6" fill="#5a9fd8" stroke="#8ac8f5" stroke-width="0.7"/><circle cx="1566" cy="51" r="3.7" fill="#808080"/><path d="M1573 38h2v18h-2" fill="none" stroke="#d8d8d8" stroke-width="1"/><path d="M1575 45.5l6 6M1581 45.5l-6 6" stroke="#e84848" stroke-width="1.7"/>
<path d="M1563 69h-2v17h2M1570 69h2v17h-2" fill="none" stroke="#d8d8d8" stroke-width="1"/><rect x="1563.5" y="71" width="6" height="5" fill="#5a9fd8"/><circle cx="1566.5" cy="80.5" r="3" fill="#808080"/><path d="M1572 87l8-8 2 2-8 8h-2z" fill="#f2c96a"/><circle cx="1580.5" cy="79" r="1.8" fill="#e05050"/>
<rect x="1557.5" y="95.5" width="28" height="26" fill="#2f5f8a" fill-opacity="0.35" stroke="#5ab4f0" stroke-width="1.2"/>
<path d="M1563 100h-2v16h2M1569 100h2v16h-2" fill="none" stroke="#d8d8d8" stroke-width="1"/><rect x="1563.5" y="102" width="5" height="4.5" fill="none" stroke="#5cc85c" stroke-width="0.9"/><circle cx="1566" cy="110.5" r="2.7" fill="none" stroke="#5cc85c" stroke-width="0.9"/><path d="M1573 106.5v12l2.5-2.5 2 4.5 1.5-.7-2-4.3h3.5z" fill="#f0f0f0"/>
<text x="1516.0" y="145.0" font-size="15" fill="#f2f2f2" font-weight="normal" textLength="46.9" lengthAdjust="spacingAndGlyphs" >Groups</text>
<path d="M1570.0 137.6h10l-5.0 5.5z" fill="#e6e6e6"/>
<rect x="1617" y="51" width="36" height="8" fill="#f2c96a"/><path d="M1620 51v3M1623 51v2M1626 51v3M1629 51v2M1632 51v3M1635 51v2M1638 51v3M1641 51v2M1644 51v3M1647 51v2M1650 51v3" stroke="#9a7a30" stroke-width="0.7"/>
<text x="1607.0" y="95.4" font-size="15" fill="#f2f2f2" font-weight="normal" textLength="56.2" lengthAdjust="spacingAndGlyphs" >Measure</text>
<path d="M1631.0 103.7h8l-4.0 4.5z" fill="#e6e6e6"/>
<path d="M1682 43v13l3-3 2.5 5 2-1-2.5-5h4.5z" fill="#f0f0f0"/><path d="M1690 36l-3 5h3l-2 5 5-6h-3l2-4z" fill="#f7cd6e"/><rect x="1690" y="46" width="12.5" height="11" fill="#eaf4fc"/><path d="M1692.5 49h1M1695 49h6M1692.5 52h1M1695 52h6M1692.5 55h1M1695 55h6" stroke="#4a90e0" stroke-width="1"/>
<rect x="1682.5" y="68.5" width="18" height="18" fill="none" stroke="#5cc85c" stroke-width="1" stroke-dasharray="2 1"/><path d="M1687 73h11v11h-11z" fill="#5cb88c"/><path d="M1684 76h10v10h-10z" fill="#6ad0a0" fill-opacity="0.85"/><path d="M1694 79v11l2.5-2.5 2 4 1.5-.7-2-4h3.5z" fill="#f0f0f0"/>
<rect x="1684" y="99.5" width="15" height="20" rx="1.5" fill="#cfcfcf"/><rect x="1686" y="101.5" width="11" height="4" fill="#888"/><g fill="#777"><rect x="1686" y="107.5" width="3" height="2.5"/><rect x="1690" y="107.5" width="3" height="2.5"/><rect x="1694" y="107.5" width="3" height="2.5"/><rect x="1686" y="111.5" width="3" height="2.5"/><rect x="1690" y="111.5" width="3" height="2.5"/><rect x="1694" y="111.5" width="3" height="2.5"/><rect x="1686" y="115.5" width="3" height="2.5"/><rect x="1690" y="115.5" width="3" height="2.5"/><rect x="1694" y="115.5" width="3" height="2.5"/></g>
<text x="1617.0" y="145.0" font-size="15" fill="#f2f2f2" font-weight="normal" textLength="50.2" lengthAdjust="spacingAndGlyphs" >Utilities</text>
<path d="M1675.0 137.6h10l-5.0 5.5z" fill="#e6e6e6"/>
<rect x="1729" y="40" width="27.6" height="30.8" fill="#dcac70"/><path d="M1736 41.5v-2.5h3.5a3 3 0 0 1 6 0h3.5v2.5z" fill="#f0f0f0" stroke="#3b4453" stroke-width="0.6"/><path d="M1737.5 47h15l8.5 8.5v21h-23.5z" fill="#d8d8d8" stroke="#3b4453" stroke-width="0.8"/><path d="M1752.5 47v8.5h8.5z" fill="#f2f2f2"/>
<text x="1728.5" y="96.3" font-size="15" fill="#f2f2f2" font-weight="normal" textLength="33.5" lengthAdjust="spacingAndGlyphs" >Paste</text>
<path d="M1741.3 104.8h8l-4.0 4.5z" fill="#e6e6e6"/>
<path d="M1780.5 37h13v14h-13z" fill="#cfcfcf"/><path d="M1782.5 40h9M1782.5 43h9M1782.5 46h9" stroke="#999" stroke-width="0.8"/><path d="M1790 45l8 8M1798 45l-8 8" stroke="#f0f0f0" stroke-width="1.4"/><circle cx="1789.5" cy="55" r="2.2" fill="none" stroke="#f0f0f0" stroke-width="1.1"/><circle cx="1798.5" cy="55" r="2.2" fill="none" stroke="#f0f0f0" stroke-width="1.1"/>
<path d="M1807.5 45.3h7l-3.5 4z" fill="#e6e6e6"/>
<path d="M1783 68h8v17h-8z" fill="#bfbfbf"/><path d="M1787 72h8l4 4v12h-12z" fill="#dcdcdc"/>
<path d="M1807.5 76.5h7l-3.5 4z" fill="#e6e6e6"/>
<text x="1735.2" y="145.0" font-size="15" fill="#f2f2f2" font-weight="normal" textLength="65.4" lengthAdjust="spacingAndGlyphs" >Clipboard</text>
<path d="M1844.5 39.7h18v12.5h23v18h-41z" fill="#e0e0e0"/>
<text x="1849.6" y="95.4" font-size="15" fill="#f2f2f2" font-weight="normal" textLength="30.1" lengthAdjust="spacingAndGlyphs" >Base</text>
<path d="M1861.0 102.5h8l-4.0 4.5z" fill="#e6e6e6"/>
<text x="1831.0" y="145.0" font-size="15" fill="#f2f2f2" font-weight="normal" textLength="32.0" lengthAdjust="spacingAndGlyphs" >View</text>
<path d="M1871.0 137.6h10l-5.0 5.5z" fill="#e6e6e6"/>
<path d="M1891.5 136.5l6 5.5M1897.5 137v5h-5" fill="none" stroke="#e0e0e0" stroke-width="1.1"/>
<rect x="954" y="11" width="19" height="9" fill="#f0f0f0"/><path d="M960.5 17.5l3-3.5 3 3.5z" fill="#666"/>
<path d="M978.0 13.8h6l-3.0 3.5z" fill="#e6e6e6"/>
<path d="M24.8 161.5h20.4M24.8 169h20.4M24.8 176.5h20.4" stroke="#e8e8e8" stroke-width="2"/>
<path d="M66.5 159.6L58 178.5M282 159.6L273.5 178.5" stroke="#4a5260" stroke-width="1"/>
<text x="77.3" y="174.6" font-size="14" fill="#f2f2f2" font-weight="normal" textLength="30.7" lengthAdjust="spacingAndGlyphs" >Start</text>
<path d="M128.8 154.1H231.7L219.9 184H117z" fill="#3b4453"/>
<text x="138.2" y="174.6" font-size="14" fill="#ffffff" font-weight="bold" textLength="57.3" lengthAdjust="spacingAndGlyphs" >uhouse*</text>
<path d="M207.5 164.5l9.5 9.5M217 164.5l-9.5 9.5" stroke="#b8bcc4" stroke-width="1.8"/>
<path d="M253 160.5v17M244.3 169h17.4" stroke="#e8e8e8" stroke-width="2"/>
<text x="8.6" y="209.1" font-size="13" fill="#e8e8e8" font-weight="normal" textLength="216.0" lengthAdjust="spacingAndGlyphs" >[−][Custom View][2D Wireframe]</text>
<rect x="1836" y="207.9" width="13" height="3" fill="#eeeeee"/>
<path d="M1864.5 200.4h9v9" fill="none" stroke="#eeeeee" stroke-width="1.6"/><rect x="1862.5" y="204.4" width="7.2" height="7" fill="none" stroke="#eeeeee" stroke-width="3"/>
<path d="M1886.5 201.8l11 9.7M1897.5 201.8l-11 9.7" stroke="#eeeeee" stroke-width="3.2"/>
<rect x="0" y="189" width="5" height="708" fill="#222832" />
<rect x="0" y="0" width="1.2" height="897" fill="#0ca2e6" />
<path d="M719.8 284.7L1358.8 418.4L1155.7 831.8L516.7 698z" fill="#fcfcfc"/>
<g opacity="0.85">
<path d="M853.3 383.2L882.4 322.4L946.6 361.2L951.6 359.2L952.6 361.2L933.5 400.3" fill="none" stroke="#4a4a4a" stroke-width="1.1" stroke-linejoin="round"/>
<path d="M858.3 382.2L885.4 327.7L944.6 363.8L929.5 397.7L858.3 382.2" fill="none" stroke="#4a4a4a" stroke-width="1.0" stroke-linejoin="round"/>
<path d="M807.1 379.6L820.2 380.6L823.2 378.2L830.2 380.6L853.3 383.2" fill="none" stroke="#777" stroke-width="0.8" stroke-linejoin="round"/>
<path d="M875.4 376.2L892.8 379.2L889.8 388.3L874.3 385.3L875.4 376.2" fill="none" stroke="#888" stroke-width="0.8" stroke-linejoin="round"/>
<path d="M875.4 385.3L892.8 379.2" fill="none" stroke="#888" stroke-width="0.7" stroke-linejoin="round"/>
<path d="M952.6 360.2L1173.3 406.7" fill="none" stroke="#4a4a4a" stroke-width="1.0" stroke-linejoin="round"/>
<path d="M885.4 322.4L1010.0 346.5" fill="none" stroke="#888" stroke-width="0.8" stroke-linejoin="round"/>
<path d="M933.6 401.3L1152.2 448.2" fill="none" stroke="#4a4a4a" stroke-width="1.0" stroke-linejoin="round"/>
<path d="M963.6 374.2L1010.0 383.8" fill="none" stroke="#666" stroke-width="1.1" stroke-linejoin="round"/>
<path d="M963.6 374.2L950.6 402.7L998.8 412.7L1010.0 386.3" fill="none" stroke="#666" stroke-width="1.1" stroke-linejoin="round"/>
<path d="M982.7 378.2L970.7 407.3" fill="none" stroke="#666" stroke-width="1.0" stroke-linejoin="round"/>
<path d="M839.2 417.4L847.3 396.3L914.5 432.8L918.1 434.8L898.4 473.5" fill="none" stroke="#4a4a4a" stroke-width="1.1" stroke-linejoin="round"/>
<path d="M849.9 401.3L911.5 434.8L896.4 470.5" fill="none" stroke="#4a4a4a" stroke-width="1.0" stroke-linejoin="round"/>
<path d="M842.2 417.4L849.3 401.3" fill="none" stroke="#4a4a4a" stroke-width="1.0" stroke-linejoin="round"/>
<path d="M839.2 417.4L817.2 457.5" fill="none" stroke="#888" stroke-width="0.8" stroke-linejoin="round"/>
<path d="M893.4 430.0L875.4 467.5" fill="none" stroke="#666" stroke-width="0.9" stroke-linejoin="round"/>
<path d="M890.0 438.4L878.4 466.5" fill="none" stroke="#888" stroke-width="0.7" stroke-linejoin="round"/>
<path d="M871.3 442.4L880.4 444.4L878.8 448.9L870.3 447.1L871.3 442.4" fill="none" stroke="#777" stroke-width="0.8" stroke-linejoin="round"/>
<path d="M851.3 451.5L864.3 454.1L862.3 457.5L853.3 456.1L851.3 451.5" fill="none" stroke="#888" stroke-width="0.8" stroke-linejoin="round"/>
<path d="M856.3 456.9L855.3 462.5" fill="none" stroke="#888" stroke-width="0.8" stroke-linejoin="round"/>
<path d="M779.0 450.5L898.4 471.5" fill="none" stroke="#666" stroke-width="0.9" stroke-linejoin="round"/>
<path d="M895.4 422.4L910.5 428.4" fill="none" stroke="#999" stroke-width="2.0" stroke-linejoin="round"/>
<path d="M918.1 434.8L1087.8 469.2" fill="none" stroke="#4a4a4a" stroke-width="1.0" stroke-linejoin="round"/>
<path d="M898.4 474.6L1070.2 509.3" fill="none" stroke="#4a4a4a" stroke-width="1.0" stroke-linejoin="round"/>
<path d="M1010.1 346.6L1235.3 396.2" fill="none" stroke="#888" stroke-width="0.8" stroke-linejoin="round"/>
<path d="M1140.0 399.6L1171.3 406.1L1175.6 407.2" fill="none" stroke="#4a4a4a" stroke-width="1.0" stroke-linejoin="round"/>
<path d="M1175.0 407.2L1151.7 446.8L1140.0 444.4" fill="none" stroke="#4a4a4a" stroke-width="1.1" stroke-linejoin="round"/>
<path d="M1171.6 406.7L1155.7 444.8" fill="none" stroke="#4a4a4a" stroke-width="0.9" stroke-linejoin="round"/>
<path d="M1170.0 415.3L1157.2 444.4" fill="none" stroke="#555" stroke-width="0.9" stroke-linejoin="round"/>
<path d="M1183.5 416.5L1169.4 447.2" fill="none" stroke="#555" stroke-width="0.9" stroke-linejoin="round"/>
<path d="M1167.8 420.5L1181.7 421.7" fill="none" stroke="#666" stroke-width="0.8" stroke-linejoin="round"/>
<path d="M1165.9 424.8L1179.8 426.0" fill="none" stroke="#666" stroke-width="0.8" stroke-linejoin="round"/>
<path d="M1164.0 429.1L1177.8 430.3" fill="none" stroke="#666" stroke-width="0.8" stroke-linejoin="round"/>
<path d="M1162.2 433.0L1176.0 434.2" fill="none" stroke="#666" stroke-width="0.8" stroke-linejoin="round"/>
<path d="M1160.4 437.0L1174.1 438.3" fill="none" stroke="#666" stroke-width="0.8" stroke-linejoin="round"/>
<path d="M1158.5 441.3L1172.1 442.6" fill="none" stroke="#666" stroke-width="0.8" stroke-linejoin="round"/>
<path d="M1174.3 412.1L1220.3 421.1L1224.6 418.3" fill="none" stroke="#4a4a4a" stroke-width="1.0" stroke-linejoin="round"/>
<path d="M1172.9 415.0L1218.5 423.8" fill="none" stroke="#4a4a4a" stroke-width="0.9" stroke-linejoin="round"/>
<path d="M1224.6 418.3L1220.3 428.1L1218.5 427.8L1222.8 418.0" fill="none" stroke="#4a4a4a" stroke-width="0.9" stroke-linejoin="round"/>
<path d="M1157.2 445.0L1202.6 455.4L1209.9 444.4" fill="none" stroke="#4a4a4a" stroke-width="1.0" stroke-linejoin="round"/>
<path d="M1211.7 443.8L1205.0 460.9" fill="none" stroke="#4a4a4a" stroke-width="1.0" stroke-linejoin="round"/>
<path d="M1220.3 428.1L1209.9 444.4" fill="none" stroke="#aaa" stroke-width="2.2" stroke-linejoin="round"/>
<path d="M1228.3 422.9L1212.4 460.9" fill="none" stroke="#aaa" stroke-width="0.8" stroke-linejoin="round"/>
<path d="M1230.8 395.9L1220.9 418.0" fill="none" stroke="#999" stroke-width="0.8" stroke-linejoin="round"/>
<path d="M1235.9 396.6L1225.2 418.0" fill="none" stroke="#999" stroke-width="0.8" stroke-linejoin="round"/>
<path d="M1197.6 405.8L1215.4 409.4L1214.2 416.8L1195.8 413.1L1197.6 405.8" fill="none" stroke="#888" stroke-width="0.8" stroke-linejoin="round"/>
<path d="M1197.0 409.4L1214.8 412.9" fill="none" stroke="#888" stroke-width="0.8" stroke-linejoin="round"/>
<path d="M1205.0 460.9L1266.3 473.2L1263.9 480.0L1275.5 482.4" fill="none" stroke="#4a4a4a" stroke-width="1.0" stroke-linejoin="round"/>
<path d="M1049.2 468.8L1077.3 474.6" fill="none" stroke="#888" stroke-width="0.8" stroke-linejoin="round"/>
<path d="M1049.2 468.8L1033.9 501.5" fill="none" stroke="#888" stroke-width="0.8" stroke-linejoin="round"/>
<path d="M1058.5 470.6L1044.0 503.6" fill="none" stroke="#888" stroke-width="0.8" stroke-linejoin="round"/>
<path d="M1067.9 472.5L1055.0 505.8" fill="none" stroke="#888" stroke-width="0.8" stroke-linejoin="round"/>
<path d="M1077.3 474.4L1064.4 507.6" fill="none" stroke="#888" stroke-width="0.8" stroke-linejoin="round"/>
<path d="M1087.8 469.2L1090.1 473.9L1071.4 509.0" fill="none" stroke="#4a4a4a" stroke-width="1.0" stroke-linejoin="round"/>
<path d="M1085.5 475.3L1068.4 509.0" fill="none" stroke="#4a4a4a" stroke-width="0.9" stroke-linejoin="round"/>
<path d="M1090.1 473.9L1179.1 465.7L1152.2 525.4" fill="none" stroke="#4a4a4a" stroke-width="1.0" stroke-linejoin="round"/>
<path d="M1112.4 467.8L1177.9 466.4" fill="none" stroke="#666" stroke-width="0.9" stroke-linejoin="round"/>
<path d="M1174.4 468.1L1149.8 523.8" fill="none" stroke="#4a4a4a" stroke-width="0.9" stroke-linejoin="round"/>
<path d="M1110.0 475.8L1093.6 513.7" fill="none" stroke="#4a4a4a" stroke-width="1.0" stroke-linejoin="round"/>
<path d="M1106.5 476.5L1090.8 513.2" fill="none" stroke="#555" stroke-width="0.8" stroke-linejoin="round"/>
<path d="M1132.3 473.9L1114.7 516.8" fill="none" stroke="#999" stroke-width="2.0" stroke-linejoin="round"/>
<path d="M1129.9 480.0L1151.7 482.1" fill="none" stroke="#777" stroke-width="0.8" stroke-linejoin="round"/>
<path d="M1128.8 489.8L1143.3 492.2" fill="none" stroke="#777" stroke-width="0.8" stroke-linejoin="round"/>
<path d="M1070.2 509.0L1147.5 524.2" fill="none" stroke="#4a4a4a" stroke-width="1.0" stroke-linejoin="round"/>
<path d="M1149.8 527.8L1186.1 536.0" fill="none" stroke="#4a4a4a" stroke-width="1.0" stroke-linejoin="round"/>
<path d="M781.5 459.0L1217.4 550.9L1092.3 804.7L656.4 712.8L781.5 459.0" fill="none" stroke="#8a8a8a" stroke-width="0.8" stroke-linejoin="round"/>
<path d="M664.7 713.4C675.8 691.3 717.6 606.1 731.0 581.0C744.4 555.9 740.2 568.3 745.0 563.0C749.8 557.7 752.9 553.8 760.0 549.0C767.1 544.2 777.4 538.8 787.4 534.3C797.4 529.8 811.2 525.2 820.0 522.0C828.8 518.8 831.0 517.0 840.2 514.9C849.4 512.8 863.7 510.8 875.4 509.6C887.1 508.4 898.8 507.9 910.5 507.9C922.2 507.9 936.6 508.8 945.6 509.6C954.6 510.4 961.3 512.1 964.4 512.6" fill="none" stroke="#8a8a8a" stroke-width="0.8" stroke-linejoin="round"/>
<path d="M674.5 715.9C684.7 695.0 724.0 614.1 735.9 590.8C747.8 567.5 742.3 580.5 746.0 576.0C749.7 571.5 751.9 568.7 758.0 563.8C764.1 558.9 772.2 552.3 782.5 546.6C792.8 540.9 808.4 534.0 820.0 529.4C831.6 524.8 840.8 521.5 852.0 519.0C863.2 516.5 875.4 515.1 887.1 514.3C898.8 513.5 909.8 513.6 922.3 514.3C934.8 515.0 955.4 517.7 962.0 518.4" fill="none" stroke="#8a8a8a" stroke-width="0.8" stroke-linejoin="round"/>
<path d="M685.6 717.1L738.3 610.4L743.2 598.1" fill="none" stroke="#999" stroke-width="0.8" stroke-linejoin="round"/>
<path d="M780.0 707.3C777.8 705.2 771.1 699.3 767.0 695.0C762.9 690.7 759.2 686.7 755.5 681.5C751.8 676.3 747.9 669.7 745.0 664.0C742.1 658.3 740.0 654.1 738.3 647.2C736.6 640.3 735.0 628.9 734.6 622.7C734.2 616.5 735.0 614.1 736.0 610.0C737.0 605.9 738.0 603.4 740.8 598.1C743.6 592.9 748.1 584.6 753.0 578.5C757.9 572.4 765.7 564.6 770.2 561.3C774.7 558.0 778.4 559.3 780.0 558.9" fill="none" stroke="#4a4a4a" stroke-width="1.1" stroke-linejoin="round"/>
<path d="M778.0 707.8C776.7 706.2 773.2 702.3 770.0 698.0C766.8 693.7 762.2 687.7 758.5 682.0C754.8 676.3 750.9 669.8 748.0 664.0C745.1 658.2 743.0 654.1 741.3 647.2C739.6 640.3 738.0 628.9 737.6 622.7C737.2 616.5 738.0 614.0 739.0 610.0C740.0 606.0 741.0 604.0 743.8 599.0C746.6 594.0 751.3 585.9 756.0 580.0C760.7 574.1 767.8 566.6 772.0 563.5C776.2 560.4 779.5 561.8 781.0 561.5" fill="none" stroke="#666" stroke-width="0.8" stroke-linejoin="round"/>
<path d="M780.0 558.9L767.8 551.5L797.2 535.6L809.5 542.9" fill="none" stroke="#333" stroke-width="1.2" stroke-linejoin="round"/>
<path d="M781.0 561.5L770.5 554.0L797.0 538.5L808.0 546.0" fill="none" stroke="#666" stroke-width="0.8" stroke-linejoin="round"/>
<path d="M809.5 542.9C812.7 541.4 820.5 536.3 828.5 533.6C836.5 530.9 848.0 528.5 857.8 526.6C867.6 524.8 876.4 523.4 887.1 522.5C897.9 521.6 910.6 520.6 922.3 521.3C934.0 522.0 951.5 525.7 957.3 526.6" fill="none" stroke="#4a4a4a" stroke-width="1.1" stroke-linejoin="round"/>
<path d="M808.0 546.0C811.8 544.4 822.4 539.2 830.9 536.4C839.4 533.6 850.6 531.1 859.0 529.4C867.4 527.7 870.7 526.9 881.2 526.0C891.8 525.1 909.8 523.6 922.3 524.1C934.8 524.6 950.6 528.2 956.2 529.0" fill="none" stroke="#666" stroke-width="0.8" stroke-linejoin="round"/>
<path d="M744.4 654.0L814.6 644.0" fill="none" stroke="#888" stroke-width="0.8" stroke-linejoin="round"/>
<path d="M746.4 659.0L816.6 650.0" fill="none" stroke="#888" stroke-width="0.8" stroke-linejoin="round"/>
<path d="M855.5 575.8C855.7 577.8 858.2 584.6 856.6 587.5C855.0 590.4 850.1 590.2 846.0 593.0C841.9 595.8 836.0 599.5 832.0 604.0C828.0 608.5 824.6 614.0 822.0 620.0C819.4 626.0 817.4 634.7 816.6 640.0C815.8 645.3 815.7 647.5 817.0 652.0C818.3 656.5 820.6 662.2 824.6 667.0C828.6 671.8 834.7 677.2 840.7 681.0C846.7 684.8 854.2 687.8 860.8 690.0C867.3 692.2 873.5 692.7 880.0 694.0C886.5 695.3 896.7 697.3 900.0 698.0" fill="none" stroke="#4a4a4a" stroke-width="1.1" stroke-linejoin="round"/>
<path d="M858.5 577.0C858.7 578.8 861.2 585.0 859.6 588.0C858.0 591.0 852.9 592.0 849.0 595.0C845.1 598.0 839.8 601.5 836.0 606.0C832.2 610.5 828.6 616.3 826.0 622.0C823.4 627.7 821.4 635.0 820.6 640.0C819.8 645.0 819.7 647.7 821.0 652.0C822.3 656.3 824.8 661.5 828.6 666.0C832.4 670.5 838.1 675.3 843.7 679.0C849.3 682.7 856.0 686.0 862.0 688.0C868.0 690.0 873.7 689.8 880.0 691.0C886.3 692.2 896.7 694.3 900.0 695.0" fill="none" stroke="#555" stroke-width="0.9" stroke-linejoin="round"/>
<path d="M856.6 586.3L887.1 577.0L914.0 575.8" fill="none" stroke="#999" stroke-width="0.8" stroke-linejoin="round"/>
<path d="M855.5 575.8L914.0 574.6L990.0 588.7L1071.0 605.0" fill="none" stroke="#4a4a4a" stroke-width="1.1" stroke-linejoin="round"/>
<path d="M914.0 577.0L990.0 591.5L1071.0 608.0" fill="none" stroke="#4a4a4a" stroke-width="0.9" stroke-linejoin="round"/>
<path d="M880.0 575.5L914.0 575.3" fill="none" stroke="#aaa" stroke-width="2.0" stroke-linejoin="round"/>
<path d="M860.0 683.2L1024.6 719.4" fill="none" stroke="#4a4a4a" stroke-width="1.0" stroke-linejoin="round"/>
<path d="M860.0 687.2L1024.6 722.4" fill="none" stroke="#4a4a4a" stroke-width="0.9" stroke-linejoin="round"/>
<path d="M973.7 502.6L940.9 564.1L1026.0 581.0" fill="none" stroke="#4a4a4a" stroke-width="1.0" stroke-linejoin="round"/>
<path d="M945.5 556.0L950.0 557.0L944.0 566.0" fill="none" stroke="#4a4a4a" stroke-width="1.0" stroke-linejoin="round"/>
<path d="M960.0 529.1L1040.3 545.2L1026.2 581.3" fill="none" stroke="#4a4a4a" stroke-width="1.0" stroke-linejoin="round"/>
<path d="M960.0 532.1L1038.3 547.8" fill="none" stroke="#666" stroke-width="0.8" stroke-linejoin="round"/>
<path d="M960.0 568.2L1026.2 581.3" fill="none" stroke="#4a4a4a" stroke-width="1.0" stroke-linejoin="round"/>
<path d="M960.0 571.2L1024.2 583.9" fill="none" stroke="#666" stroke-width="0.8" stroke-linejoin="round"/>
<path d="M972.0 535.1L1004.1 541.1L1002.1 547.2L971.0 541.1L972.0 535.1" fill="none" stroke="#888" stroke-width="0.8" stroke-linejoin="round"/>
<path d="M982.1 537.1L980.1 543.1" fill="none" stroke="#888" stroke-width="0.7" stroke-linejoin="round"/>
<path d="M994.1 539.1L992.1 545.2" fill="none" stroke="#888" stroke-width="0.7" stroke-linejoin="round"/>
<path d="M1073.4 551.2L1150.6 567.2L1132.6 603.3L1056.3 588.3L1073.4 551.2" fill="none" stroke="#4a4a4a" stroke-width="1.1" stroke-linejoin="round"/>
<path d="M1076.4 554.2L1146.6 569.2" fill="none" stroke="#666" stroke-width="0.8" stroke-linejoin="round"/>
<path d="M1150.6 567.2L1132.6 603.3" fill="none" stroke="#999" stroke-width="2.2" stroke-linejoin="round"/>
<path d="M1085.4 559.2L1098.5 562.2L1091.4 588.3L1078.4 585.3L1085.4 559.2" fill="none" stroke="#999" stroke-width="0.8" stroke-linejoin="round"/>
<path d="M1112.5 564.2L1144.6 570.6L1138.6 586.3L1106.5 579.3L1112.5 564.2" fill="none" stroke="#999" stroke-width="0.8" stroke-linejoin="round"/>
<path d="M1052.3 569.2L1060.3 570.6L1058.3 576.7L1050.3 575.3L1052.3 569.2" fill="none" stroke="#999" stroke-width="0.8" stroke-linejoin="round"/>
<path d="M1104.5 600.3L1115.5 602.3L1113.5 608.4L1102.5 606.4L1104.5 600.3" fill="none" stroke="#aaa" stroke-width="0.8" stroke-linejoin="round"/>
<path d="M1071.4 607.4L1088.4 609.4" fill="none" stroke="#4a4a4a" stroke-width="1.0" stroke-linejoin="round"/>
<path d="M1071.4 607.4L1036.3 680.0" fill="none" stroke="#4a4a4a" stroke-width="1.1" stroke-linejoin="round"/>
<path d="M1074.4 608.4L1039.3 680.0" fill="none" stroke="#666" stroke-width="0.8" stroke-linejoin="round"/>
<path d="M1088.4 609.4L1054.3 680.0" fill="none" stroke="#666" stroke-width="0.8" stroke-linejoin="round"/>
<path d="M1065.1 620.4L1082.1 622.8" fill="none" stroke="#666" stroke-width="0.8" stroke-linejoin="round"/>
<path d="M1058.3 634.4L1075.3 636.9" fill="none" stroke="#666" stroke-width="0.8" stroke-linejoin="round"/>
<path d="M1052.0 647.5L1069.0 649.9" fill="none" stroke="#666" stroke-width="0.8" stroke-linejoin="round"/>
<path d="M1045.7 660.5L1062.7 662.9" fill="none" stroke="#666" stroke-width="0.8" stroke-linejoin="round"/>
<path d="M1039.8 672.6L1056.9 675.0" fill="none" stroke="#666" stroke-width="0.8" stroke-linejoin="round"/>
<path d="M1132.6 603.3L1102.5 661.5" fill="none" stroke="#4a4a4a" stroke-width="1.0" stroke-linejoin="round"/>
<path d="M1129.6 603.3L1100.5 660.5" fill="none" stroke="#666" stroke-width="0.8" stroke-linejoin="round"/>
<path d="M1101.5 661.5L1094.4 680.0" fill="none" stroke="#aaa" stroke-width="2.2" stroke-linejoin="round"/>
<path d="M1068.7 620.0L1027.6 695.3L1042.6 697.3L1039.6 703.3L1052.6 706.3L1047.6 713.3L1075.7 718.3L1096.8 664.1" fill="none" stroke="#4a4a4a" stroke-width="1.0" stroke-linejoin="round"/>
<path d="M1082.7 620.0L1058.7 673.2L1044.6 671.2" fill="none" stroke="#666" stroke-width="0.8" stroke-linejoin="round"/>
<path d="M1061.0 634.0L1076.1 635.7" fill="none" stroke="#666" stroke-width="0.8" stroke-linejoin="round"/>
<path d="M1053.9 647.1L1068.9 648.7" fill="none" stroke="#666" stroke-width="0.8" stroke-linejoin="round"/>
<path d="M1046.8 660.1L1061.8 661.7" fill="none" stroke="#666" stroke-width="0.8" stroke-linejoin="round"/>
<path d="M1096.8 664.1L1088.8 684.2" fill="none" stroke="#aaa" stroke-width="2.0" stroke-linejoin="round"/>
<path d="M1024.5 696.3L1016.5 716.3" fill="none" stroke="#999" stroke-width="0.8" stroke-linejoin="round"/>
<path d="M860.0 702.3L912.2 714.3L992.4 730.4" fill="none" stroke="#4a4a4a" stroke-width="1.0" stroke-linejoin="round"/>
<path d="M912.2 714.3L896.1 748.4L956.3 762.5L1046.6 780.5L1070.7 729.4L1041.6 724.3" fill="none" stroke="#4a4a4a" stroke-width="1.1" stroke-linejoin="round"/>
<path d="M914.2 717.3L899.1 747.4" fill="none" stroke="#666" stroke-width="0.8" stroke-linejoin="round"/>
<path d="M992.4 730.4L977.4 763.5" fill="none" stroke="#666" stroke-width="0.9" stroke-linejoin="round"/>
<path d="M978.4 729.4L962.3 761.5" fill="none" stroke="#666" stroke-width="0.9" stroke-linejoin="round"/>
<path d="M972.4 740.4L985.4 743.4" fill="none" stroke="#666" stroke-width="0.8" stroke-linejoin="round"/>
<path d="M966.4 751.4L982.4 754.4" fill="none" stroke="#666" stroke-width="0.8" stroke-linejoin="round"/>
<path d="M1041.6 725.4C1040.8 726.9 1039.1 731.9 1036.6 734.4C1034.1 736.9 1030.2 738.7 1026.6 740.4C1022.9 742.1 1018.2 743.4 1014.5 744.4C1010.8 745.4 1006.2 746.1 1004.5 746.4" fill="none" stroke="#555" stroke-width="0.9" stroke-linejoin="round"/>
<path d="M1004.5 746.4L984.4 743.4" fill="none" stroke="#666" stroke-width="0.8" stroke-linejoin="round"/>
<path d="M879.1 707.3L864.0 742.4" fill="none" stroke="#4a4a4a" stroke-width="1.0" stroke-linejoin="round"/>
<path d="M860.0 740.4L896.1 748.4" fill="none" stroke="#4a4a4a" stroke-width="1.0" stroke-linejoin="round"/>
<path d="M883.1 714.3L892.1 716.3L884.1 740.4L875.1 738.4L883.1 714.3" fill="none" stroke="#aaa" stroke-width="0.8" stroke-linejoin="round"/>
<path d="M1070.7 729.4L1058.7 751.4" fill="none" stroke="#999" stroke-width="2.0" stroke-linejoin="round"/>
<path d="M729.3 689.2L717.3 712.2L766.4 723.3L814.6 733.3" fill="none" stroke="#4a4a4a" stroke-width="1.1" stroke-linejoin="round"/>
<path d="M731.3 691.2L720.3 711.2" fill="none" stroke="#666" stroke-width="0.8" stroke-linejoin="round"/>
<path d="M729.3 689.8L760.4 695.2" fill="none" stroke="#888" stroke-width="0.8" stroke-linejoin="round"/>
<path d="M772.4 708.2L765.4 724.3" fill="none" stroke="#888" stroke-width="0.8" stroke-linejoin="round"/>
<path d="M720.3 715.3L766.4 725.3L814.6 735.9" fill="none" stroke="#666" stroke-width="0.8" stroke-linejoin="round"/>
<path d="M734.3 717.3L766.4 724.3L765.4 727.3L733.3 720.3L734.3 717.3" fill="none" stroke="#777" stroke-width="0.8" stroke-linejoin="round"/>
<path d="M788.5 728.3L812.6 733.3L811.6 735.9L787.5 730.7" fill="none" stroke="#777" stroke-width="0.8" stroke-linejoin="round"/>
<path d="M812.6 733.3L826.6 704.2L836.7 702.6L838.7 705.2L850.7 700.2L880.0 706.2L864.7 740.3L812.6 733.3" fill="none" stroke="#4a4a4a" stroke-width="1.1" stroke-linejoin="round"/>
<path d="M815.6 732.3L828.6 706.6L848.7 702.6L876.8 708.2" fill="none" stroke="#666" stroke-width="0.8" stroke-linejoin="round"/>
<path d="M866.8 740.3L880.0 741.3" fill="none" stroke="#4a4a4a" stroke-width="1.0" stroke-linejoin="round"/>
<path d="M592.0 670.0L632.0 679.0" fill="none" stroke="#555" stroke-width="1.0" stroke-linejoin="round"/>
<path d="M617.0 665.0L612.0 687.0" fill="none" stroke="#777" stroke-width="0.8" stroke-linejoin="round"/>
<ellipse cx="880.1" cy="547.7" rx="19" ry="12.5" transform="rotate(8 880.1 547.7)" fill="none" stroke="#777" stroke-width="0.8"/>
<ellipse cx="868.4" cy="532.5" rx="5" ry="3.5" transform="rotate(10 868.4 532.5)" fill="none" stroke="#777" stroke-width="0.8"/>
<ellipse cx="888.3" cy="531.3" rx="5" ry="3.5" transform="rotate(10 888.3 531.3)" fill="none" stroke="#777" stroke-width="0.8"/>
<ellipse cx="904.6" cy="540.1" rx="5" ry="3.5" transform="rotate(10 904.6 540.1)" fill="none" stroke="#777" stroke-width="0.8"/>
<ellipse cx="906.4" cy="553.5" rx="5" ry="3.5" transform="rotate(10 906.4 553.5)" fill="none" stroke="#777" stroke-width="0.8"/>
<ellipse cx="892.4" cy="563.5" rx="5" ry="3.5" transform="rotate(10 892.4 563.5)" fill="none" stroke="#777" stroke-width="0.8"/>
<ellipse cx="871.3" cy="564.7" rx="5" ry="3.5" transform="rotate(10 871.3 564.7)" fill="none" stroke="#777" stroke-width="0.8"/>
<ellipse cx="856.6" cy="555.3" rx="5" ry="3.5" transform="rotate(10 856.6 555.3)" fill="none" stroke="#777" stroke-width="0.8"/>
<ellipse cx="854.9" cy="542.4" rx="5" ry="3.5" transform="rotate(10 854.9 542.4)" fill="none" stroke="#777" stroke-width="0.8"/>
<ellipse cx="1097.5" cy="576" rx="5" ry="3.8" fill="none" stroke="#999" stroke-width="0.8"/>
<ellipse cx="614" cy="676" rx="17.5" ry="10.5" transform="rotate(10 614 676)" fill="none" stroke="#666" stroke-width="0.9"/>
<text x="0" y="0" font-size="7.5" fill="#444" textLength="128" lengthAdjust="spacingAndGlyphs" transform="matrix(0.97886 0.20481 -0.44104 0.89750 850.3 394.0)" style="font-family:Liberation Serif;font-weight:bold;font-style:italic;">North-south section; scale:  1/150.</text>
<text x="0" y="0" font-size="4.5" fill="#777" textLength="34" lengthAdjust="spacingAndGlyphs" transform="matrix(0.97886 0.20481 -0.44104 0.89750 897.5 389.5)" style="font-family:Liberation Sans;">main room</text>
<text x="0" y="0" font-size="7.5" fill="#444" textLength="62" lengthAdjust="spacingAndGlyphs" transform="matrix(0.97886 0.20481 -0.44104 0.89750 813.5 464.5)" style="font-family:Liberation Serif;font-weight:bold;font-style:italic;">East-west section.</text>
<text x="0" y="0" font-size="4.5" fill="#777" textLength="16" lengthAdjust="spacingAndGlyphs" transform="matrix(0.97886 0.20481 -0.44104 0.89750 1182.5 450.5)" style="font-family:Liberation Sans;">study</text>
<text x="0" y="0" font-size="4.5" fill="#777" textLength="27" lengthAdjust="spacingAndGlyphs" transform="matrix(0.97886 0.20481 -0.44104 0.89750 1120 517.5)" style="font-family:Liberation Sans;">bathroom</text>
<text x="0" y="0" font-size="4.5" fill="#777" textLength="23" lengthAdjust="spacingAndGlyphs" transform="matrix(0.97886 0.20481 -0.44104 0.89750 979.5 558.5)" style="font-family:Liberation Sans;">kitchen</text>
<text x="0" y="0" font-size="4.5" fill="#777" textLength="34" lengthAdjust="spacingAndGlyphs" transform="matrix(0.97886 0.20481 -0.44104 0.89750 774.5 599.5)" style="font-family:Liberation Sans;">main room</text>
<text x="0" y="0" font-size="4.5" fill="#777" textLength="17" lengthAdjust="spacingAndGlyphs" transform="matrix(0.97886 0.20481 -0.44104 0.89750 1073.5 661)" style="font-family:Liberation Sans;">study</text>
<text x="0" y="0" font-size="4.5" fill="#777" textLength="24" lengthAdjust="spacingAndGlyphs" transform="matrix(0.97886 0.20481 -0.44104 0.89750 834 721)" style="font-family:Liberation Sans;">storage</text>
<text x="0" y="0" font-size="4.5" fill="#777" textLength="26" lengthAdjust="spacingAndGlyphs" transform="matrix(0.97886 0.20481 -0.44104 0.89750 924 739)" style="font-family:Liberation Sans;">bedroom</text>
<text x="0" y="0" font-size="4.5" fill="#777" textLength="27" lengthAdjust="spacingAndGlyphs" transform="matrix(0.97886 0.20481 -0.44104 0.89750 1006.5 758.5)" style="font-family:Liberation Sans;">bedroom</text>
<text x="0" y="0" font-size="7.5" fill="#444" textLength="146" lengthAdjust="spacingAndGlyphs" transform="matrix(0.97886 0.20481 -0.44104 0.89750 657.5 720.5)" style="font-family:Liberation Serif;font-weight:bold;font-style:italic;">Plot and first-floor plan; scale:   1/150.</text>
</g>
<path d="M719.8 284.7L1358.8 418.4L1155.7 831.8L516.7 698z" fill="none" stroke="#ff0000" stroke-width="1.1"/>
<line x1="5" y1="326.7" x2="1910" y2="725.1" stroke="#ee0000" stroke-width="1.4"/>
<line x1="5" y1="330.6" x2="1910" y2="728.8" stroke="#ee0000" stroke-width="1.4"/>
<line x1="5" y1="339.5" x2="1910" y2="737.8" stroke="#ee0000" stroke-width="1.4"/>
<line x1="1219" y1="189" x2="871.3" y2="897" stroke="#ee0000" stroke-width="1.4"/>
<path d="M522 635h14.5l-14.5 14.5h14.5" fill="none" stroke="#d0d0d0" stroke-width="1.3"/>
<path d="M536 642l4.5 3" stroke="#d0d0d0" stroke-width="1.1"/><path d="M540.5 645l4-4M540.5 645v7" stroke="#f4f4f4" stroke-width="1.1"/>
<line x1="517" y1="651" x2="517" y2="694" stroke="#d0d0d0" stroke-width="1.2"/>
<path d="M513.5 693.5l-3.5 6.5 11.5 2 2.5-6z" fill="none" stroke="#d0d0d0" stroke-width="1.1"/>
<ellipse cx="1825.3" cy="333.4" rx="58.5" ry="36.5" fill="none" stroke="#363636" stroke-width="13"/>
<ellipse cx="1823" cy="336" rx="36" ry="18" fill="#0c0c0c" opacity="0.9"/>
<path d="M1809.6 264.7L1856.6 273.4L1843 304.7L1792.2 293.1z" fill="#a4a4a4"/>
<path d="M1792.2 293.1L1843 304.7L1841 342.5L1793.7 330.9z" fill="#9c9c9c"/>
<path d="M1843 304.7L1856.6 273.4L1855.5 307.7L1841 342.5z" fill="#8e8e8e"/>
<path d="M1792.2 293.1L1843 304.7L1856.6 273.4M1843 304.7L1841 342.5" fill="none" stroke="#6a6a6a" stroke-width="0.8" stroke-dasharray="2.5 1.2"/>
<path d="M1803 290.5l31 6.5-1.5 9-31-6.5z" fill="#8d9098" opacity="0.75"/>
<path d="M1849 305l3-7M1847.5 315l2.5-6M1846 324l2-5" stroke="#5a5a5a" stroke-width="1"/>
<text x="0" y="0" font-size="10.5" font-weight="bold" fill="#505050" textLength="21" lengthAdjust="spacingAndGlyphs" transform="translate(1815 286.5) rotate(9) skewX(-14)" style="font-family:Liberation Sans">TOP</text>
<text x="0" y="0" font-size="11.5" font-weight="bold" fill="#525252" textLength="34" lengthAdjust="spacingAndGlyphs" transform="translate(1800.5 320) rotate(9)" style="font-family:Liberation Sans">FRONT</text>
<text x="0" y="0" font-size="16" font-weight="bold" fill="#a6a6a6" textLength="21" lengthAdjust="spacingAndGlyphs" transform="translate(1761 318.5) rotate(-13) scale(1 0.85) skewX(-14)" style="font-family:Liberation Sans">W</text>
<text x="0" y="0" font-size="16" font-weight="bold" fill="#a6a6a6" textLength="13" lengthAdjust="spacingAndGlyphs" transform="translate(1876.5 343.5) rotate(12) skewX(-10)" style="font-family:Liberation Sans">E</text>
<text x="0" y="0" font-size="20" font-weight="bold" fill="#aaaaaa" textLength="16" lengthAdjust="spacingAndGlyphs" transform="translate(1794.5 377.5) rotate(4) skewX(-12)" style="font-family:Liberation Sans">S</text>
<rect x="1796.5" y="395.3" width="55" height="19" rx="4.5" fill="#82858d" stroke="#9a9da5" stroke-width="1"/>
<text x="1800.5" y="409.5" font-size="12.5" fill="#5c5f67" textLength="30" lengthAdjust="spacingAndGlyphs" style="font-family:Liberation Sans">WCS</text>
<path d="M1838 402h9l-4.5 5z" fill="#aeb1b8"/>
<rect x="1867.5" y="446.5" width="39" height="256.5" rx="4" fill="#3e3e3e" stroke="#5a5a5a" stroke-width="1"/>
<circle cx="1899.7" cy="452.5" r="3.3" fill="#333" stroke="#2a2a2a" stroke-width="0.8"/><path d="M1898 451l3.4 3M1901.4 451l-3.4 3" stroke="#555" stroke-width="0.8"/>
<path d="M1887.7 466.5a13.5 13.5 0 1 0 13.5 13.5v-13.5z" fill="none" stroke="#262626" stroke-width="1.4"/><circle cx="1887.7" cy="480" r="8" fill="none" stroke="#262626" stroke-width="1.4"/><path d="M1880 485l-5 4M1895.5 485l5 4" stroke="#262626" stroke-width="1.4"/>
<path d="M1884.7 504.3h6l-3 3z" fill="#262626"/>
<path d="M1869 514.5h36M1869 646.8h36" stroke="#4e4e4e" stroke-width="1"/>
<path d="M1877 540l-4-6q-1-3 2-3l5 5v-12q0-2.5 2.2-2.5t2.2 2.5v8v-11q0-2.5 2.2-2.5t2.2 2.5v11v-9.5q0-2.5 2.2-2.5t2.2 2.5v10v-7q0-2.3 2-2.3t2 2.3v11q0 9-8 9.5h-3q-4 0-7-4z" fill="none" stroke="#262626" stroke-width="1.3"/>
<path d="M1873 553.5l20 20M1873 553.5h6M1873 553.5v6M1873 573.5l12-12M1873 573.5h6M1873 573.5v-6M1893 553.5l-8 8M1893 553.5h-6M1893 553.5v6" fill="none" stroke="#262626" stroke-width="1.3"/><circle cx="1894.5" cy="575.5" r="5" fill="#3e3e3e" stroke="#262626" stroke-width="1.4"/><path d="M1898 579l4 4" stroke="#262626" stroke-width="2.5"/>
<path d="M1884.7 591.3h6l-3 3zM1884.7 638.2h6l-3 3z" fill="#262626"/>
<path d="M1885.5 626v-19h-3.5l5.5-6 5.5 6h-3.5v19z" fill="none" stroke="#262626" stroke-width="1.3"/><path d="M1882 612q-10 2-10 5.5t15.5 5.5t15.5-5.5q0-3.5-10-5.5" fill="none" stroke="#262626" stroke-width="1.3"/><path d="M1876 621l-4 3 5 2" fill="none" stroke="#262626" stroke-width="1.3"/>
<path d="M1872.5 652.5h6v7h-6zM1881 652.5h6v7h-6zM1889.5 652.5h6v7h-6zM1872.5 664h21v16h-21z" fill="none" stroke="#262626" stroke-width="1.3"/><path d="M1879.5 667.5v9l8-4.5z" fill="#262626"/>
<circle cx="1899.7" cy="696" r="4" fill="#333" stroke="#2a2a2a" stroke-width="0.8"/><path d="M1897.5 695h4.4l-2.2 2.5z" fill="#555"/>
</svg></body></html>
